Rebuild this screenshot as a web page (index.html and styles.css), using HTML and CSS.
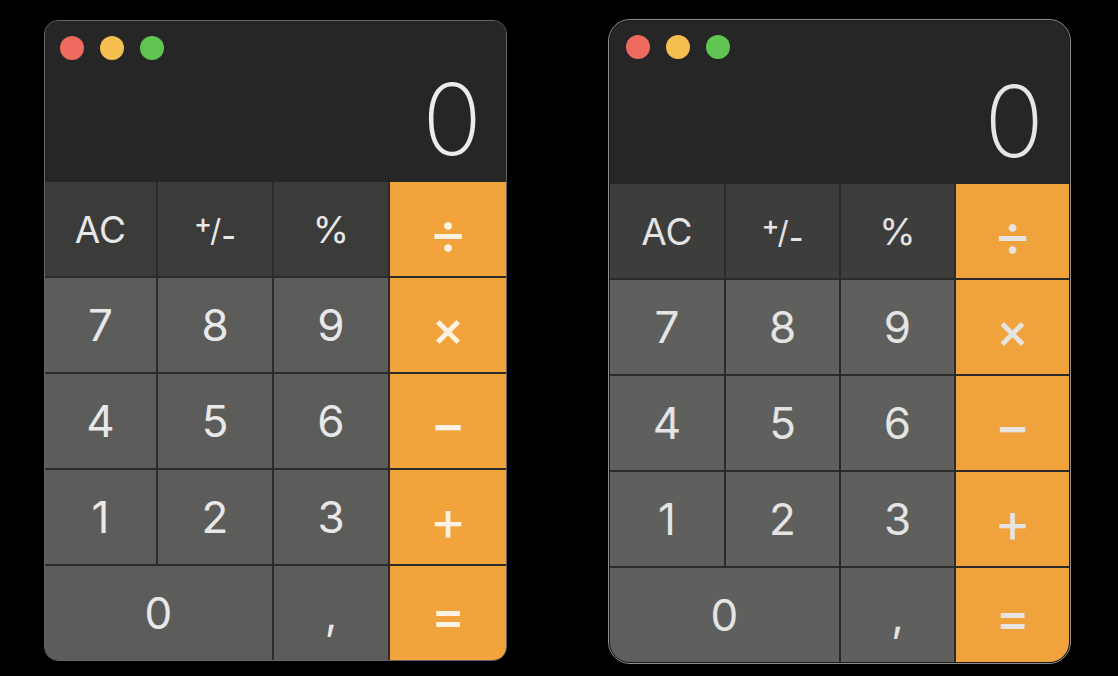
FILE: index.html
```html
<!DOCTYPE html>
<html lang="en">
<head>
<meta charset="utf-8">
<title>Calculator</title>
<link rel="stylesheet" href="styles.css">
</head>
<body>
<div class="stage">
  <div class="win win--a">
    <div class="frame">
      <div class="display">
        <div class="lights">
          <span class="light light--red"></span>
          <span class="light light--yellow"></span>
          <span class="light light--green"></span>
        </div>
        <div class="readout">0</div>
      </div>
      <div class="keypad">
        <div class="key key--fn">AC</div>
        <div class="key key--fn"><span class="pm"><span class="pm-plus">+</span><span class="pm-slash">/</span><span class="pm-minus">-</span></span></div>
        <div class="key key--fn">%</div>
        <div class="key key--op key--div">÷</div>
        <div class="key">7</div>
        <div class="key">8</div>
        <div class="key">9</div>
        <div class="key key--op key--mul">×</div>
        <div class="key">4</div>
        <div class="key">5</div>
        <div class="key">6</div>
        <div class="key key--op key--sub">−</div>
        <div class="key">1</div>
        <div class="key">2</div>
        <div class="key">3</div>
        <div class="key key--op key--add">+</div>
        <div class="key key--zero">0</div>
        <div class="key key--comma">,</div>
        <div class="key key--op key--eq">=</div>
      </div>
    </div>
  </div>
  <div class="win win--b">
    <div class="frame">
      <div class="display">
        <div class="lights">
          <span class="light light--red"></span>
          <span class="light light--yellow"></span>
          <span class="light light--green"></span>
        </div>
        <div class="readout">0</div>
      </div>
      <div class="keypad">
        <div class="key key--fn">AC</div>
        <div class="key key--fn"><span class="pm"><span class="pm-plus">+</span><span class="pm-slash">/</span><span class="pm-minus">-</span></span></div>
        <div class="key key--fn">%</div>
        <div class="key key--op key--div">÷</div>
        <div class="key">7</div>
        <div class="key">8</div>
        <div class="key">9</div>
        <div class="key key--op key--mul">×</div>
        <div class="key">4</div>
        <div class="key">5</div>
        <div class="key">6</div>
        <div class="key key--op key--sub">−</div>
        <div class="key">1</div>
        <div class="key">2</div>
        <div class="key">3</div>
        <div class="key key--op key--add">+</div>
        <div class="key key--zero">0</div>
        <div class="key key--comma">,</div>
        <div class="key key--op key--eq">=</div>
      </div>
    </div>
  </div>
</div>
</body>
</html>
```
FILE: styles.css
```css
* { box-sizing: border-box; }

html, body {
  margin: 0;
  padding: 0;
  background: #000;
}

body {
  width: 1118px;
  height: 676px;
  overflow: hidden;
  font-family: Inter, "Noto Sans", "Liberation Sans", sans-serif;
}

.stage {
  display: flex;
  align-items: flex-start;
  gap: 101px;
  padding: 19px 0 0 44px;
}

.win {
  width: 463px;
  overflow: hidden;
  background: #262626;
}

.win--a {
  margin-top: 1px;
  height: 641px;
  border: 1px solid #666666;
  border-radius: 14px;
}

.win--b {
  height: 645px;
  border: 1px solid #8e8e8e;
  border-radius: 22px;
}

.frame {
  height: 100%;
  display: flex;
  flex-direction: column;
  overflow: hidden;
}

.win--b .frame {
  border: 1px solid #1c1c1c;
  border-radius: 21px;
}

.display {
  display: flex;
  flex-direction: column;
  background: #262626;
}

.win--a .display {
  height: 161px;
  padding: 15px 0 0 15px;
}

.win--b .display {
  height: 163px;
  padding: 14px 0 0 16px;
}

.lights {
  display: flex;
  gap: 16px;
}

.light {
  width: 24px;
  height: 24px;
  border-radius: 50%;
}

.light--red { background: #ee6a5f; }
.light--yellow { background: #f5bf4f; }
.light--green { background: #61c554; }

.readout {
  margin-top: auto;
  text-align: right;
  font-family: Inter, "Liberation Sans", sans-serif;
  font-weight: 200;
  font-size: 99px;
  line-height: 99px;
  color: #ececec;
}

.win--a .readout {
  padding-right: 24px;
  margin-bottom: 13px;
}

.win--b .readout {
  padding-right: 25px;
  margin-bottom: 13px;
  color: #e6e6e6;
}

.keypad {
  display: grid;
  grid-template-rows: repeat(5, 94px);
  gap: 2px;
  background: #2b2b2b;
}

.win--a .keypad {
  grid-template-columns: 111px 114px 114px 116px;
}

.win--b .keypad {
  grid-template-columns: 114px 113px 113px 113px;
}

.key {
  display: flex;
  align-items: center;
  justify-content: center;
  background: #5c5c5b;
  color: #e8e8e8;
  font-size: 44px;
  line-height: 1;
  font-weight: 400;
}

.win--b .key {
  background: #5f5f5e;
  color: #e4e4e4;
}

.key--fn {
  font-size: 37px;
  background: #3b3b3a;
}

.win--b .key--fn {
  background: #3d3d3c;
}

.key--op {
  background: #f2a33b;
  color: #fdf2e3;
  font-weight: 400;
  padding-top: 5px;
}

.key--div { font-size: 60px; }
.key--mul { font-size: 50px; font-weight: 500; }
.key--sub { font-size: 54px; font-weight: 500; }
.key--add { font-size: 56px; }
.key--eq  { font-size: 52px; font-weight: 500; }

.win--b .key--op {
  background: #f0a23c;
  color: #e6e4e1;
}

.key--zero {
  grid-column: span 2;
}

.pm {
  display: inline-flex;
  align-items: baseline;
  line-height: 1;
  margin-top: 4px;
}

.pm-plus {
  position: relative;
  top: -9px;
  font-size: 27px;
  font-weight: 500;
  margin-right: -2px;
}

.pm-slash {
  font-size: 31px;
}

.pm-minus {
  position: relative;
  top: 5px;
  font-size: 32px;
  font-weight: 500;
}
```
